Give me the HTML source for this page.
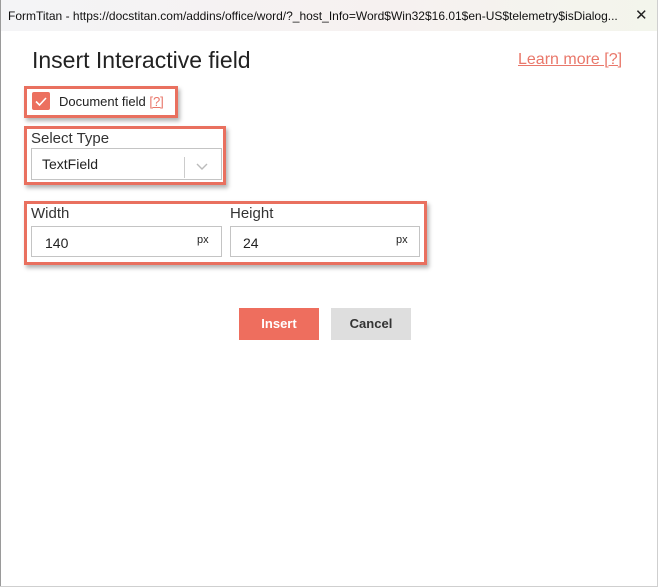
<!DOCTYPE html>
<html><head><style>
*{box-sizing:border-box;margin:0;padding:0}
body{width:658px;height:587px;background:#fff;font-family:"Liberation Sans",sans-serif;position:relative;overflow:hidden}
.a{position:absolute}
.tb{left:0;top:0;width:658px;height:31px;background:linear-gradient(90deg,#f4f4f6,#f6f1f0 60%,#f3f5ec);}
.box{position:absolute;border:3px solid #e9705f;box-shadow:2px 3px 4px rgba(0,0,0,.3)}
.inp{position:absolute;border:1px solid #c4c4c4;background:#fff;font-size:14px;color:#222}
.lbl{position:absolute;font-size:15px;color:#333}
</style></head><body>
<div class="a tb"></div>
<div class="a" style="left:0;top:0;width:1px;height:587px;background:#9a9a9a"></div>
<div class="a" style="right:0;top:0;width:1px;height:587px;background:#cfcfcf"></div>
<div class="a" style="left:0;bottom:0;width:658px;height:1px;background:#cfcfcf"></div>
<div class="a" style="left:8px;top:9px;font-size:12px;color:#111;white-space:nowrap">FormTitan - https://docstitan.com/addins/office/word/?_host_Info=Word$Win32$16.01$en-US$telemetry$isDialog...</div>
<div class="a" style="left:635px;top:6px;font-size:15px;color:#222">✕</div>
<div class="a" style="left:32px;top:47px;font-size:23px;color:#222;font-weight:300">Insert Interactive field</div>
<div class="a" style="left:518px;top:51px;font-size:16px;color:#e9776a;text-decoration:underline">Learn more [?]</div>
<div class="box" style="left:24px;top:86px;width:154px;height:32px"></div>
<div class="a" style="left:32px;top:92px;width:18px;height:18px;background:#ec705f;border-radius:2px"><svg width="18" height="18"><path d="M4 9.5l3.5 3.5L14 6" stroke="#fff" stroke-width="1.6" fill="none"/></svg></div>
<div class="a" style="left:59px;top:94px;font-size:13px;color:#222">Document field <span style="color:#e9776a;text-decoration:underline">[?]</span></div>
<div class="box" style="left:24px;top:126px;width:202px;height:59px"></div>
<div class="lbl" style="left:31px;top:130px">Select Type</div>
<div class="inp" style="left:31px;top:148px;width:191px;height:32px"><span class="a" style="left:10px;top:7px">TextField</span><span class="a" style="left:152px;top:8px;width:1px;height:21px;background:#ccc"></span><svg class="a" style="left:164px;top:12px" width="12" height="10"><path d="M1 3l5 5 5-5" stroke="#bbb" stroke-width="1.4" fill="none"/></svg></div>
<div class="box" style="left:24px;top:201px;width:403px;height:64px"></div>
<div class="lbl" style="left:31px;top:205px">Width</div>
<div class="lbl" style="left:230px;top:205px">Height</div>
<div class="inp" style="left:31px;top:226px;width:191px;height:31px"><span class="a" style="left:13px;top:8px">140</span><span class="a" style="left:165px;top:7px;font-size:11px">px</span></div>
<div class="inp" style="left:230px;top:226px;width:190px;height:31px"><span class="a" style="left:12px;top:8px">24</span><span class="a" style="left:165px;top:7px;font-size:11px">px</span></div>
<div class="a" style="left:239px;top:308px;width:80px;height:32px;background:#ee6e5e;color:#fff;font-weight:bold;font-size:13px;text-align:center;line-height:32px">Insert</div>
<div class="a" style="left:331px;top:308px;width:80px;height:32px;background:#dedede;color:#333;font-weight:bold;font-size:13px;text-align:center;line-height:32px">Cancel</div>
</body></html>
